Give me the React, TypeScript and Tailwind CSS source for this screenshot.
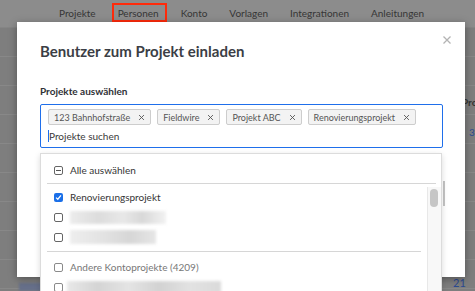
import React from "react";

function XIcon({ className }: { className?: string }) {
  return (
    <svg viewBox="0 0 10 10" className={className} fill="none" stroke="currentColor" strokeWidth="1.3">
      <path d="M1.5 1.5 L8.5 8.5 M8.5 1.5 L1.5 8.5" />
    </svg>
  );
}

function Chip({ label }: { label: string }) {
  return (
    <div className="shrink-0 whitespace-nowrap flex items-center h-[16px] pl-[5px] pr-[5px] border border-[#cdcdcd] bg-[#f3f3f3] rounded-[2px] text-[9px] leading-none text-[#555]">
      <span>{label}</span>
      <XIcon className="w-[7px] h-[7px] ml-[8px] text-[#555]" />
    </div>
  );
}

function Box({ kind }: { kind: "empty" | "minus" | "checked" | "light" }) {
  if (kind === "checked") {
    return (
      <div className="shrink-0 w-[9px] h-[9px] rounded-[2px] bg-[#1a6fe8] flex items-center justify-center">
        <svg viewBox="0 0 10 10" className="w-[7px] h-[7px]" fill="none" stroke="white" strokeWidth="1.8">
          <path d="M1.5 5.2 L4 7.5 L8.5 2" />
        </svg>
      </div>
    );
  }
  return (
    <div
      className={
        "shrink-0 w-[9px] h-[9px] rounded-[2px] border flex items-center justify-center bg-white " +
        (kind === "light" ? "border-[#8a8a8a]" : "border-[#666]")
      }
    >
      {kind === "minus" && <div className="w-[5px] h-px bg-[#555]" />}
    </div>
  );
}

export default function App() {
  const navItems = ["Projekte", "Personen", "Konto", "Vorlagen", "Integrationen", "Anleitungen"];
  return (
    <div className="relative w-[475px] h-[291px] overflow-hidden bg-[#7e7e7e] font-[Lato,sans-serif]">
      {/* top bar */}
      <div className="h-[28px] bg-[#8c8c8c] border-b border-[#858585] flex items-start pt-[7px] pl-[59px] gap-[22px] text-[10px] text-[#363636]">
        {navItems.map((n) => (
          <div key={n} className="relative leading-[12px] whitespace-nowrap">
            {n}
            {n === "Personen" && (
              <div className="absolute left-[-6px] right-[-8px] top-[-4px] bottom-[-3px] border-2 border-[#ff2a0a]" />
            )}
          </div>
        ))}
      </div>
      {/* page rows */}
      <div className="flex flex-col">
        {Array.from({ length: 9 }).map((_, i) => (
          <div key={i} className="h-[29px] border-b border-[#888888]" />
        ))}
      </div>
      <div className="absolute left-[462px] top-[95px] text-[10px] font-bold text-[#333] whitespace-nowrap">Projekt</div>
      <div className="absolute left-[469px] top-[125px] text-[10px] text-[#2c4a92]">3</div>
      <div className="absolute left-[453px] top-[275px] text-[11px] text-[#2c4a92]">21</div>
      <div className="absolute left-[19px] top-[283px] w-[23px] h-[8px] bg-[#67708a] blur-[1px]" />

      {/* modal */}
      <div className="absolute left-[17px] top-[22px] w-[448px] h-[255px] bg-white shadow-[0_2px_8px_rgba(0,0,0,0.35)] pt-[19px] pl-[23px] pr-[22px]">
        <XIcon className="absolute right-[13px] top-[13px] w-[10px] h-[10px] text-[#b3b3b3]" />
        <div className="absolute left-[426px] top-[159px] w-[2px] h-[25px] bg-[#c4c4c4]" />
        <h1 className="text-[15px] leading-[20px] font-bold text-[#3b3e45]">Benutzer zum Projekt einladen</h1>
        <div className="mt-[23px] text-[10px] leading-[14px] font-bold text-[#2f3136]">Projekte auswählen</div>
        <div className="mt-[6px] w-[403px] border border-[#1f6feb] rounded-[2px] pl-[7px] pt-[4px] pb-[3px]">
          <div className="flex gap-[6px]">
            <Chip label="123 Bahnhofstraße" />
            <Chip label="Fieldwire" />
            <Chip label="Projekt ABC" />
            <Chip label="Renovierungsprojekt" />
          </div>
          <div className="mt-[3px] flex items-center h-[16px] text-[10px] text-[#3a3a3a]">
            <div className="w-px h-[12px] bg-[#1f6feb]" />
            <span>Projekte suchen</span>
          </div>
        </div>

        {/* dropdown */}
        <div className="absolute left-[23px] top-[131px] w-[402px] h-[150px] bg-white border border-[#dcdcdc] shadow-[0_2px_6px_rgba(0,0,0,0.15)] text-[10px] text-[#353535]">
          <div className="pt-[6px] pl-[13px] flex items-center h-[26px] gap-[7px]">
            <Box kind="minus" />
            <span>Alle auswählen</span>
          </div>
          <div className="mt-[3px] ml-[6px] mr-[5px] h-px bg-[#d6d6d6]" />
          <div className="flex">
            <div className="flex-1 pt-[3px]">
              <div className="pl-[13px] flex items-center h-[20px] gap-[7px]">
                <Box kind="checked" />
                <span>Renovierungsprojekt</span>
              </div>
              <div className="pl-[13px] flex items-center h-[20px] gap-[7px]">
                <Box kind="empty" />
                <div className="w-[96px] h-[13px] bg-[linear-gradient(90deg,#ececec,#dcdcdc_30%,#e8e8e8_55%,#d8d8d8_75%,#f2f2f2)] blur-[1.5px]" />
              </div>
              <div className="pl-[13px] flex items-center h-[20px] gap-[7px]">
                <Box kind="empty" />
                <div className="w-[86px] h-[14px] bg-[linear-gradient(90deg,#eeeeee,#e2e2e2_40%,#d6d6d6_70%,#e6e6e6)] blur-[1.5px]" />
              </div>
              <div className="mt-[4px] ml-[6px] mr-[6px] h-px bg-[#d6d6d6]" />
              <div className="mt-[5px] pl-[13px] flex items-center h-[20px] gap-[7px] text-[#777]">
                <Box kind="light" />
                <span>Andere Kontoprojekte (4209)</span>
              </div>
              <div className="pl-[13px] flex items-center h-[20px] gap-[4px]">
                <Box kind="light" />
                <div className="w-[154px] h-[12px] bg-[linear-gradient(90deg,#e8e8e8,#d4d4d4_20%,#e4e4e4_40%,#d2d2d2_60%,#e2e2e2_80%,#dadada)] blur-[1.5px]" />
              </div>
            </div>
            <div className="w-[14px] mt-[3px] bg-[#f8f8f8] border-l border-[#e8e8e8] pt-[2px] pl-[2px]">
              <div className="w-[8px] h-[18px] rounded-full bg-[#c6c6c6]" />
            </div>
          </div>
        </div>
      </div>
    </div>
  );
}
